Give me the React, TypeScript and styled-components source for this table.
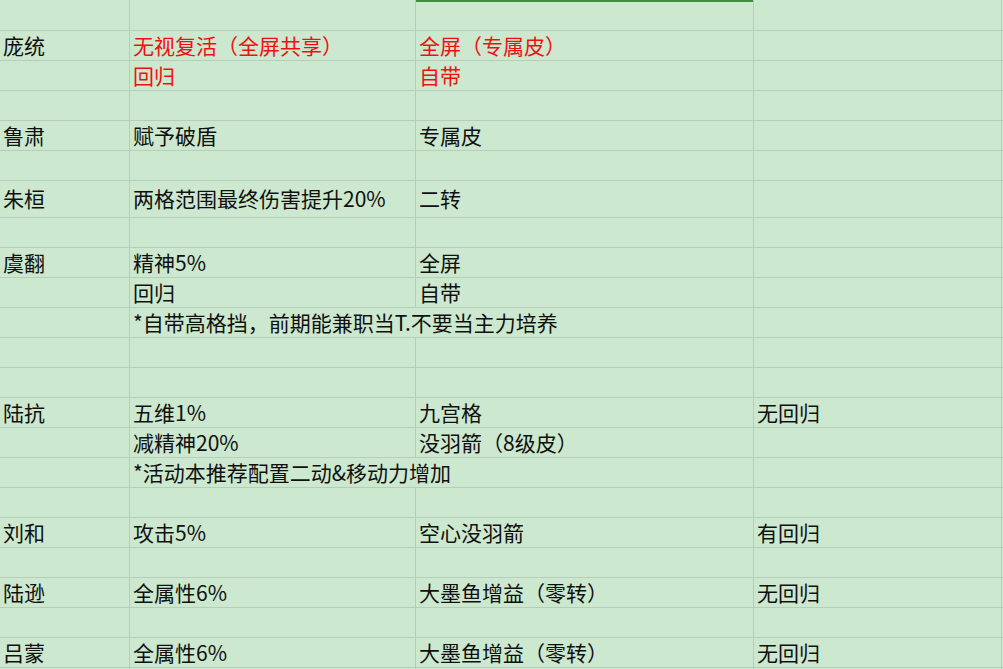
import * as React from 'react';
import styled, { createGlobalStyle } from 'styled-components';

const GlobalStyle = createGlobalStyle`
  html, body {
    margin: 0;
    padding: 0;
    background: #cce8cf;
    overflow: hidden;
  }
  body {
    font-family: "Noto Sans CJK SC", "Noto Sans", sans-serif;
  }
`;

const GRID_LINE = '#b7cdb9';
const COLUMNS = '130px 286px 338px 248px 1fr';

const Sheet = styled.div`
  width: 1003px;
  height: 669px;
  overflow: hidden;
  background: #cce8cf;
`;

const Row = styled.div<{ $height: number }>`
  display: grid;
  grid-template-columns: ${COLUMNS};
  height: ${(p) => p.$height}px;
`;

const Cell = styled.div<{ $red?: boolean; $span?: number; $selectedTop?: boolean }>`
  box-sizing: border-box;
  grid-column: span ${(p) => p.$span || 1};
  display: flex;
  align-items: center;
  padding: 0 0 1px 3px;
  border-right: 1px solid ${GRID_LINE};
  border-bottom: 1px solid ${GRID_LINE};
  font-size: 21px;
  line-height: 1;
  white-space: nowrap;
  overflow: visible;
  color: ${(p) => (p.$red ? '#f01010' : '#101010')};
  box-shadow: ${(p) => (p.$selectedTop ? 'inset 0 2px 0 #3d8f3d' : 'none')};
`;

type CellData = { text?: string; red?: boolean; span?: number; selectedTop?: boolean };
type RowData = { height?: number; cells: CellData[] };

const t = (text: string, red = false): CellData => ({ text, red });
const blank: CellData = {};
const emptyRow: RowData = { cells: [blank, blank, blank, blank, blank] };

const rows: RowData[] = [
  { height: 31, cells: [blank, blank, { selectedTop: true }, blank, blank] },
  { cells: [t('庞统'), t('无视复活（全屏共享）', true), t('全屏（专属皮）', true), blank, blank] },
  { cells: [blank, t('回归', true), t('自带', true), blank, blank] },
  emptyRow,
  { cells: [t('鲁肃'), t('赋予破盾'), t('专属皮'), blank, blank] },
  emptyRow,
  { height: 37, cells: [t('朱桓'), t('两格范围最终伤害提升20%'), t('二转'), blank, blank] },
  emptyRow,
  { cells: [t('虞翻'), t('精神5%'), t('全屏'), blank, blank] },
  { cells: [blank, t('回归'), t('自带'), blank, blank] },
  { cells: [blank, { text: '*自带高格挡，前期能兼职当T.不要当主力培养', span: 2 }, blank, blank] },
  emptyRow,
  emptyRow,
  { cells: [t('陆抗'), t('五维1%'), t('九宫格'), t('无回归'), blank] },
  { cells: [blank, t('减精神20%'), t('没羽箭（8级皮）'), blank, blank] },
  { cells: [blank, { text: '*活动本推荐配置二动&移动力增加', span: 2 }, blank, blank] },
  emptyRow,
  { cells: [t('刘和'), t('攻击5%'), t('空心没羽箭'), t('有回归'), blank] },
  emptyRow,
  { cells: [t('陆逊'), t('全属性6%'), t('大墨鱼增益（零转）'), t('无回归'), blank] },
  emptyRow,
  { cells: [t('吕蒙'), t('全属性6%'), t('大墨鱼增益（零转）'), t('无回归'), blank] },
  emptyRow,
];

export default function App() {
  return (
    <>
      <GlobalStyle />
      <Sheet>
        {rows.map((row, i) => (
          <Row key={i} $height={row.height || 30}>
            {row.cells.map((c, j) => (
              <Cell key={j} $red={c.red} $span={c.span} $selectedTop={c.selectedTop}>
                {c.text}
              </Cell>
            ))}
          </Row>
        ))}
      </Sheet>
    </>
  );
}
